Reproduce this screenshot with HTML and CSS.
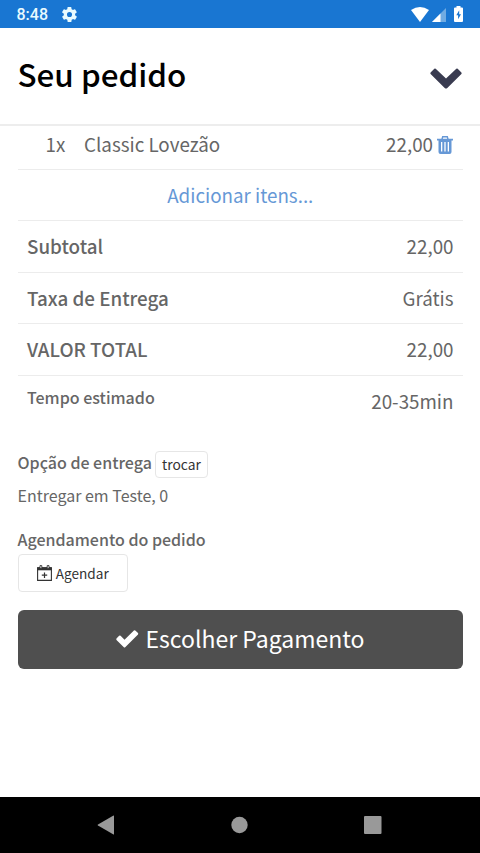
FILE: index.html
```html
<!DOCTYPE html>
<html lang="pt-BR">
<head>
<meta charset="utf-8">
<title>Seu pedido</title>
<link rel="stylesheet" href="styles.css">
</head>
<body>
<div class="status">
  <span class="time">8:48</span>
  <svg class="gear" viewBox="2 2 20 20"><path fill="#e9fbff" d="M19.4 13a7.500 7.500 0 0 0 0-2l2.100-1.600a.5.5 0 0 0 .1-.6l-2-3.500a.5.5 0 0 0-.6-.2l-2.500 1a7.300 7.300 0 0 0-1.700-1l-.4-2.600a.5.5 0 0 0-.5-.5h-4a.5.5 0 0 0-.5.4L9 5.100a7.700 7.700 0 0 0-1.700 1l-2.500-1a.5.5 0 0 0-.6.200l-2 3.500a.5.5 0 0 0 .1.600L4.500 11a8 8 0 0 0 0 2l-2.100 1.600a.5.5 0 0 0-.1.600l2 3.500c.1.200.4.300.6.200l2.500-1a7.300 7.300 0 0 0 1.700 1l.4 2.600c0 .3.200.5.500.5h4c.3 0 .5-.2.500-.4l.4-2.700a7.700 7.700 0 0 0 1.700-1l2.500 1c.2.100.5 0 .6-.2l2-3.500a.5.500 0 0 0-.1-.6zM12 8.600a3.400 3.400 0 1 1 0 6.800 3.400 3.400 0 0 1 0-6.800z"/></svg>
  <svg class="wifi" viewBox="0 0 18 15"><path fill="#fff" d="M0 3Q9-3 18 3L9 15Z"/></svg>
  <svg class="signal" viewBox="0 0 14 14"><path fill="#70abe2" d="M14 0V14H0Z"/><path fill="#fff" d="M8.500 5.500V14H0Z"/></svg>
  <svg class="battery" viewBox="0 0 9 16"><path fill="#fff" d="M2.500 0h4v1.500H8a1 1 0 0 1 1 1V15a1 1 0 0 1-1 1H1a1 1 0 0 1-1-1V2.500a1 1 0 0 1 1-1h1.500z"/><path fill="#1976d2" d="M5.200 4.200 2.300 9.300h1.800v4L7 8.200H5.200z"/></svg>
</div>
<header class="header">
  <h1>Seu pedido</h1>
  <svg class="chevron" viewBox="0 0 32 21"><path fill="#393b50" d="M16 20.500Q15.400 20.500 14.700 19.900L.6 5.900Q0 5.200 .6 4.500L4.300.8Q5 .2 5.700.8L16 10.600 26.300.8Q27 .2 27.700.8L31.400 4.500Q32 5.200 31.400 5.900L17.300 19.900Q16.600 20.500 16 20.500Z"/></svg>
</header>
<main class="content">
  <div class="row item">
    <span class="qty">1x</span><span class="name">Classic Lovezão</span><span class="value">22,00</span>
    <svg class="trash" viewBox="0 0 16 18"><path fill="none" stroke="#6698d6" stroke-width="1.400" d="M5 3.200 5.700.8h4.600l.7 2.400"/><path fill="#6698d6" fill-rule="evenodd" d="M0 2.700h16v1.800h-1.500V16a2 2 0 0 1-2 2h-9a2 2 0 0 1-2-2V4.500H0zM4 6v9.500h1.300V6zm3.350 0v9.500h1.300V6zm3.350 0v9.500H12V6z"/></svg>
  </div>
  <div class="row add"><a>Adicionar itens...</a></div>
  <div class="row raised"><b>Subtotal</b><span class="value">22,00</span></div>
  <div class="row"><b>Taxa de Entrega</b><span class="value">Grátis</span></div>
  <div class="row"><b>VALOR TOTAL</b><span class="value">22,00</span></div>
  <div class="row last"><b class="estimate">Tempo estimado</b><span class="value">20-35min</span></div>
  <div class="delivery"><b>Opção de entrega</b><button class="change">trocar</button></div>
  <p class="address">Entregar em Teste, 0</p>
  <b class="scheduling">Agendamento do pedido</b>
  <button class="schedule"><svg class="calendar" viewBox="0 0 15 16"><path fill="none" stroke="#333" stroke-width="1.100" d="M.6 2.800h13.800v12.600H.6z"/><path fill="#333" d="M.3 2.300h14.400v3H.3z"/><path fill="#fff" stroke="#333" stroke-width=".9" d="M3 .6h1.800v3H3zM10.200.6H12v3h-1.800z"/><path stroke="#333" stroke-width="1.200" d="M7.500 7.500v5.400M4.800 10.200h5.400"/></svg><span>Agendar</span></button>
  <button class="pay"><svg class="check" viewBox="0 0 23 18"><path fill="#fff" d="M22.500 4.300 9.400 17.400Q8.700 18 8 17.400L.5 9.900Q0 9.200.5 8.500L3.200 5.800Q4 5.200 4.700 5.800L8.700 9.800 18.300.4Q19-.2 19.700.4L22.500 2.900Q23 3.600 22.500 4.300Z"/></svg><span>Escolher Pagamento</span></button>
</main>
<nav class="nav">
  <svg viewBox="0 0 18 20"><path fill="#999" d="M16.500.5 1 9.400Q0 10 1 10.600L16.500 19.500Q17 19.700 17 19V1Q17 .3 16.500.5Z"/></svg>
  <svg viewBox="0 0 18 20"><circle cx="9.500" cy="10" r="8.200" fill="#999"/></svg>
  <svg viewBox="0 0 18 20"><rect x="0" y="1" width="17.500" height="18" rx="1" fill="#999"/></svg>
</nav>
</body>
</html>
```
FILE: styles.css
```css
* { box-sizing: border-box; }
body {
  margin: 0;
  height: 853px;
  display: flex;
  flex-direction: column;
  overflow: hidden;
  background: #fff;
  color: #666;
  font-family: "Noto Sans CJK SC", sans-serif;
}
svg { display: block; flex: none; }
b { font-weight: 500; }
button { font: inherit; background: #fff; border: 1px solid #e6e6e6; border-radius: 4px; padding: 0; color: #333; }

.status { height: 28px; flex: none; display: flex; align-items: center; padding: 0 17px 0 16.500px; background: #1976d2; }
.time { font: 500 16px/28px Roboto, sans-serif; color: #e9fbff; width: 45.500px; padding-top: 1px; }
.gear { width: 15px; height: 15px; }
.wifi { width: 18px; height: 15px; margin-left: auto; }
.signal { width: 14px; height: 14px; margin: 1px 8px 0 3px; }
.battery { width: 9px; height: 16px; }

.header { height: 98px; flex: none; display: flex; align-items: center; justify-content: space-between; padding: 0 18.500px 0 17.500px; border-bottom: 2px solid #ededed; }
h1 { margin: 0; font-size: 31.400px; font-weight: 500; line-height: 40px; padding-bottom: 5px; color: #000; }
.chevron { width: 32px; height: 21px; margin-top: 4px; }

.content { flex: 1; padding: 0 17px 0 17.500px; }
.row { height: 51.400px; display: flex; align-items: center; padding: 0 9.500px; border-bottom: 1.500px solid #ececec; font-size: 18.800px; line-height: 28px; }
.value { margin-left: auto; }
.item { height: 44px; padding: 0 10px 8px 28px; }
.qty { width: 38.500px; }
.trash { width: 16px; height: 18px; margin: 2px 0 0 4px; }
.add { justify-content: center; color: #6698d6; }
.raised { padding-bottom: 1.500px; }
.last { border: 0; padding-bottom: 1.500px; }
.estimate { font-size: 16px; padding-bottom: 8px; }
.delivery { height: 28px; margin-top: 23.500px; display: flex; gap: 3px; font-size: 16px; line-height: 24px; }
.change { width: 53px; height: 27px; font-size: 13.800px; line-height: 25px; margin-top: 1px; }
.address { margin: 5px 0 0; font-size: 16px; line-height: 24px; }
.scheduling { display: block; margin-top: 20px; font-size: 16px; line-height: 24px; }
.schedule { width: 110.500px; height: 38px; margin-top: 2.500px; display: flex; align-items: center; justify-content: center; gap: 4px; font-size: 13.600px; }
.calendar { width: 15px; height: 16px; }
.pay { width: 445.500px; height: 59px; margin-top: 18px; display: flex; align-items: center; justify-content: center; gap: 7px; border: 0; border-radius: 6px; background: #4f4f4f; color: #fff; font-size: 23px; padding-bottom: 3px; }
.check { width: 22.500px; height: 18px; margin-top: 1.500px; }

.nav { height: 56px; flex: none; display: flex; align-items: center; justify-content: space-between; padding: 0 98.500px 0 97px; background: #000; }
.nav svg { width: 18px; height: 20px; }
```
